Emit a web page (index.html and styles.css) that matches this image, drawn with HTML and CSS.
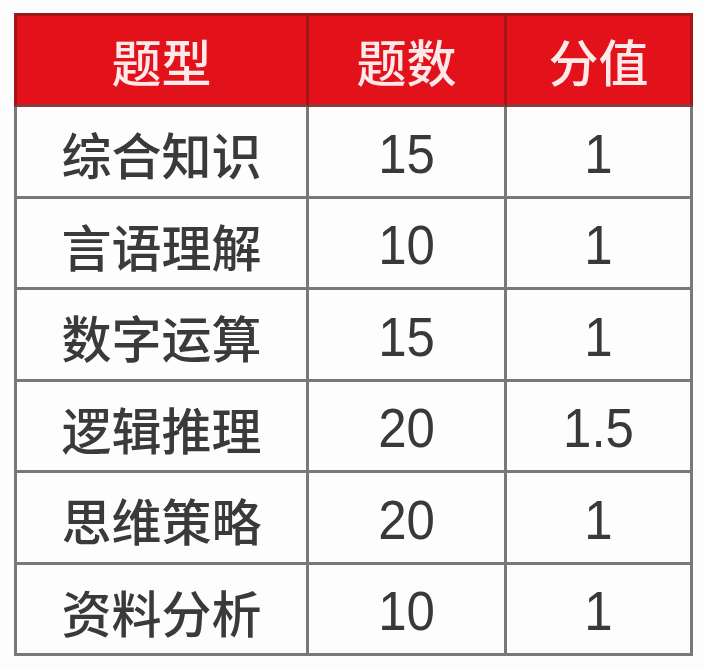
FILE: index.html
```html
<!DOCTYPE html>
<html lang="zh">
<head>
<meta charset="utf-8">
<title>题型分值</title>
<link rel="stylesheet" href="styles.css">
</head>
<body>
<div class="table">
  <div class="cell head first">题型</div>
  <div class="cell head">题数</div>
  <div class="cell head">分值</div>

  <div class="cell first">综合知识</div>
  <div class="cell num"><span>15</span></div>
  <div class="cell num"><span>1</span></div>

  <div class="cell first">言语理解</div>
  <div class="cell num"><span>10</span></div>
  <div class="cell num"><span>1</span></div>

  <div class="cell first">数字运算</div>
  <div class="cell num"><span>15</span></div>
  <div class="cell num"><span>1</span></div>

  <div class="cell first">逻辑推理</div>
  <div class="cell num"><span>20</span></div>
  <div class="cell num"><span>1.5</span></div>

  <div class="cell first">思维策略</div>
  <div class="cell num"><span>20</span></div>
  <div class="cell num"><span>1</span></div>

  <div class="cell first">资料分析</div>
  <div class="cell num"><span>10</span></div>
  <div class="cell num"><span>1</span></div>
</div>
</body>
</html>
```
FILE: styles.css
```css
html, body {
  margin: 0;
  padding: 0;
  background: #fdfdfd;
}

body {
  font-family: "Noto Sans CJK SC", "Liberation Sans", sans-serif;
  color: #3a3a3a;
}

.table {
  margin: 13px 0 0 14px;
  display: grid;
  grid-template-columns: 295px 198px 186px;
  grid-template-rows: 94px;
  grid-auto-rows: 91.5px;
  width: max-content;
}

.cell {
  box-sizing: border-box;
  display: flex;
  align-items: center;
  justify-content: center;
  border-right: 3px solid #7a7878;
  border-bottom: 3px solid #7a7878;
  background: #fdfdfd;
  font-size: 50px;
  font-weight: 500;
  line-height: 1;
  padding-top: 4px;
}

.cell.first {
  border-left: 3px solid #7a7878;
}

.cell.head {
  background: #e3121a;
  color: #fde9ea;
  border-top: 3px solid #a0161a;
  border-right-color: #a0161a;
  border-bottom-color: #8c3a3c;
  font-size: 50px;
  padding-top: 0;
}

.cell.head.first {
  border-left-color: #a0161a;
}

.cell.num {
  font-family: "Liberation Sans", sans-serif;
  font-size: 51px;
  font-weight: 400;
  color: #3a3838;
}

.cell.num span {
  display: inline-block;
  transform: scaleY(1.1);
}
```
